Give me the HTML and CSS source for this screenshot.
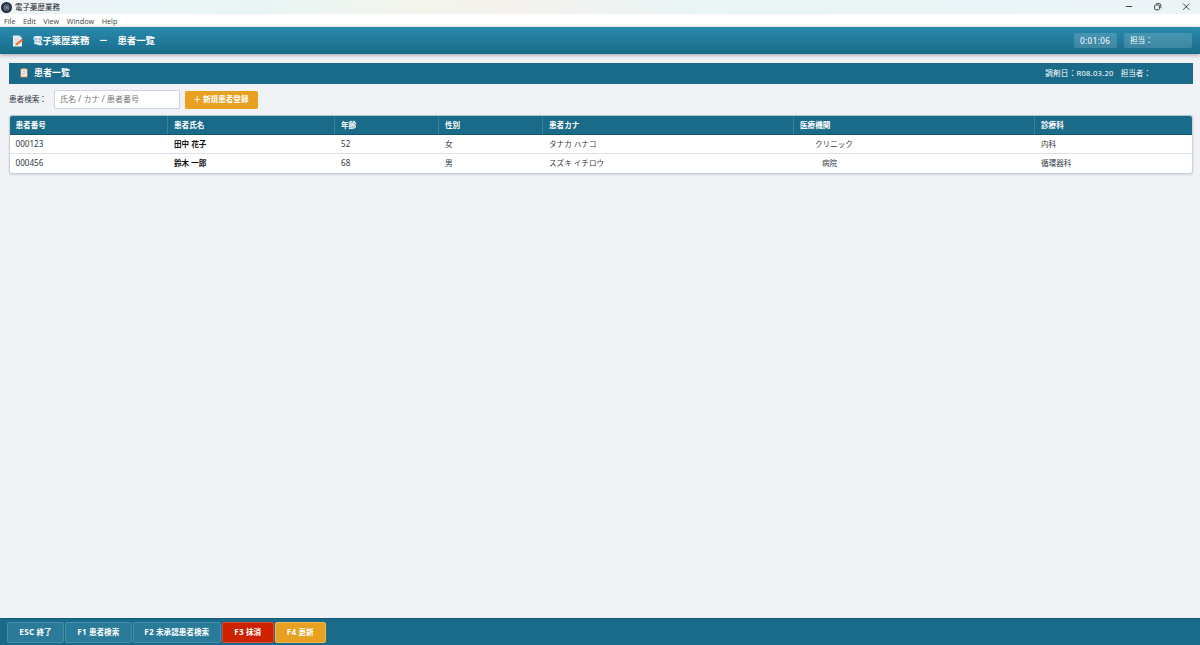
FILE: index.html
```html
<!DOCTYPE html>
<html lang="ja">
<head>
    <meta charset="UTF-8">
    <meta name="viewport" content="width=device-width, initial-scale=1.0">
    <title>電子薬歴業務</title>
    <link rel="stylesheet" href="styles.css">
</head>
<body>
    <div class="titlebar">
        <svg class="app-icon" viewBox="0 0 22 22">
            <circle cx="11" cy="11" r="11" fill="#272b3b"/>
            <g fill="none" stroke="#8fa7b8" stroke-width="1">
                <ellipse cx="11" cy="11" rx="7" ry="2.6"/>
                <ellipse cx="11" cy="11" rx="7" ry="2.6" transform="rotate(60 11 11)"/>
                <ellipse cx="11" cy="11" rx="7" ry="2.6" transform="rotate(120 11 11)"/>
            </g>
            <circle cx="11" cy="11" r="1.3" fill="#8fa7b8"/>
        </svg>
        <span class="app-name">電子薬歴業務</span>
        <div class="window-buttons">
            <svg viewBox="0 0 10 10"><path d="M1.8 4.5h6.4"/></svg>
            <svg viewBox="0 0 10 10"><rect x="1.6" y="3" width="4.8" height="4.8" rx="1"/><path d="M3.2 1.6h2.9a1.7 1.7 0 0 1 1.7 1.7v2.9"/></svg>
            <svg viewBox="0 0 10 10"><path d="M2 1.5l6.4 6.4M8.4 1.5l-6.4 6.4"/></svg>
        </div>
    </div>
    <nav class="menubar">
        <span>File</span><span>Edit</span><span>View</span><span>Window</span><span>Help</span>
    </nav>

    <header class="header">
        <svg class="memo-icon" viewBox="0 0 12 12">
            <path d="M1 .5h6.5L10 3v8.5H1z" fill="#e9edf4"/>
            <path d="M7.5.5V3H10z" fill="#b9c5d3"/>
            <path d="M2.3 3h4M2.3 4.8h5M2.3 6.6h3M2.3 8.4h2" stroke="#c5cbd6" stroke-width=".5"/>
            <path d="M3.2 10.5l.7-2.3 5-3.7 1.5 1.8-4.9 3.8z" fill="#f47a2c"/>
            <path d="M8.9 4.5l1-.7 1.5 1.8-1 .7z" fill="#e4405a"/>
        </svg>
        <h1>電子薬歴業務　<span class="dash">－</span>　患者一覧</h1>
        <div class="badge clock">0:01:06</div>
        <div class="badge staff">担当：</div>
    </header>

    <main class="content">
        <div class="panel-title">
            <svg class="clip-icon" viewBox="0 0 8 10">
                <rect x=".2" y=".5" width="7.6" height="9" rx=".5" fill="#bd7844"/>
                <rect x="1.1" y="1.2" width="5.8" height="7.5" fill="#f3f0f2"/>
                <rect x="2.6" y=".2" width="2.8" height="1.3" rx=".4" fill="#a9b1bb"/>
                <path d="M2 3.4h4M2 5h4M2 6.6h3" stroke="#a3a9bd" stroke-width=".5"/>
            </svg>
            <h2>患者一覧</h2>
            <span class="date">調剤日：R08.03.20</span>
            <span class="person">担当者：</span>
        </div>

        <div class="search">
            <label for="search">患者検索：</label>
            <input id="search" type="text" placeholder="氏名 / カナ / 患者番号">
            <button class="new-button">＋ 新規患者登録</button>
        </div>

        <table class="patients">
            <thead>
                <tr>
                    <th class="col-id">患者番号</th>
                    <th class="col-name">患者氏名</th>
                    <th class="col-age">年齢</th>
                    <th class="col-sex">性別</th>
                    <th class="col-kana">患者カナ</th>
                    <th class="col-clinic">医療機関</th>
                    <th>診療科</th>
                </tr>
            </thead>
            <tbody>
                <tr>
                    <td class="num">000123</td>
                    <td class="name">田中 花子</td>
                    <td class="num">52</td>
                    <td>女</td>
                    <td>タナカ ハナコ</td>
                    <td class="clinic">クリニック</td>
                    <td>内科</td>
                </tr>
                <tr>
                    <td class="num">000456</td>
                    <td class="name">鈴木 一郎</td>
                    <td class="num">68</td>
                    <td>男</td>
                    <td>スズキ イチロウ</td>
                    <td class="hospital">病院</td>
                    <td>循環器科</td>
                </tr>
            </tbody>
        </table>
    </main>

    <footer class="footer">
        <button class="key-esc"><span class="key">ESC</span> 終了</button>
        <button class="key-f1"><span class="key">F1</span> 患者検索</button>
        <button class="key-f2"><span class="key">F2</span> 未承認患者検索</button>
        <button class="key-f3 danger"><span class="key">F3</span> 抹消</button>
        <button class="key-f4 warning"><span class="key">F4</span> 更新</button>
    </footer>
</body>
</html>
```
FILE: styles.css
```css
* {
    box-sizing: border-box;
}
body {
    margin: 0;
    height: 100vh;
    display: flex;
    flex-direction: column;
    overflow: hidden;
    background: #f0f2f6;
    color: #333a44;
    font-family: "Noto Sans", "Noto Sans CJK JP", sans-serif;
    font-size: 7.6px;
    white-space: nowrap;
}
h1, h2 {
    margin: 0;
}
button, input {
    font-family: inherit;
    font-size: inherit;
    padding: 0;
}

/* ウィンドウ枠 */
.titlebar {
    height: 14px;
    display: flex;
    align-items: center;
    background: linear-gradient(90deg, #eef5fa, #e9f5f5 22%, #f3f6ed 34%, #f5f2ed 43%, #e9f5f6 58%, #ecf4f7);
}
.app-icon {
    width: 11px;
    height: 11px;
    margin-left: 1px;
}
.app-name {
    margin-left: 3px;
    padding-bottom: 1px;
    font-size: 7.5px;
    color: #222;
}
.window-buttons {
    display: flex;
    gap: 18.5px;
    margin-left: auto;
    margin-right: 9px;
}
.window-buttons svg {
    width: 10px;
    height: 10px;
    fill: none;
    stroke: #333;
    stroke-width: 0.9;
}
.menubar {
    height: 13px;
    display: flex;
    align-items: center;
    gap: 7.4px;
    padding-left: 4px;
    background: #fff;
    font-family: "Open Sans", sans-serif;
    font-size: 7.3px;
    color: #444;
}

/* ヘッダー */
.header {
    height: 27px;
    flex: none;
    display: flex;
    align-items: center;
    padding: 0 8px 0 12px;
    background: linear-gradient(#2a8aad, #1a6b8a);
    box-shadow: 0 1px 4px rgba(0, 0, 0, 0.35);
    color: #fff;
}
.memo-icon {
    width: 12px;
    height: 12px;
}
.header h1 {
    margin-left: 9px;
    padding-bottom: 2px;
    font-size: 9.4px;
}
.dash {
    font-weight: 900;
}
.badge {
    height: 15px;
    line-height: 15px;
    padding: 0 6px;
    border-radius: 2px;
    background: rgba(255, 255, 255, 0.15);
}
.clock {
    width: 43px;
    margin-left: auto;
    font-size: 8.1px;
    letter-spacing: 0.4px;
}
.staff {
    width: 68px;
    margin-left: 7px;
}

/* 患者一覧 */
.content {
    flex: 1;
    padding: 9px 7px 0 9px;
}
.panel-title {
    height: 21px;
    display: flex;
    align-items: center;
    padding: 0 42px 1px 11px;
    background: #1a6b8a;
    color: #fff;
}
.clip-icon {
    width: 8px;
    height: 10px;
}
.panel-title h2 {
    margin-left: 6px;
    padding-bottom: 1px;
    font-size: 9px;
}
.date, .person {
    padding-bottom: 1px;
}
.date {
    margin-left: auto;
    letter-spacing: 0.25px;
}
.person {
    margin-left: 7px;
}
.search {
    height: 31px;
    display: flex;
    align-items: center;
}
.search label {
    width: 45px;
    padding-bottom: 2px;
}
.search input {
    width: 126px;
    height: 19px;
    padding: 0 5px 2px;
    border: 1px solid #ccd5df;
    border-radius: 2px;
    background: #fff;
    font-size: 8.1px;
}
.search input::placeholder {
    color: #777;
}
.new-button {
    width: 73px;
    height: 18px;
    margin-left: 4.5px;
    padding-bottom: 2px;
    border: 0;
    border-radius: 2px;
    background: #e8a020;
    color: #fff;
    font-weight: bold;
}
.patients {
    width: 1184px;
    table-layout: fixed;
    border-collapse: separate;
    border-spacing: 0;
    border: 1px solid #c8d2dc;
    border-top-color: #a9c3cf;
    border-radius: 3px;
    overflow: hidden;
    background: #fff;
    box-shadow: 0 1px 2px rgba(0, 0, 0, 0.12);
}
.patients th, .patients td {
    padding: 0 6px;
    text-align: left;
    line-height: 10px;
}
.patients th {
    height: 19px;
    background: #1a6b8a;
    color: #fff;
    border-right: 1px solid #3b819c;
    border-bottom: 1px solid #145570;
}
.patients th:first-child, .patients td:first-child {
    padding-left: 5.5px;
}
.patients th:last-child {
    border-right: 0;
}
.patients td {
    height: 19px;
    padding-bottom: 1px;
    border-bottom: 1px solid #dbe0e9;
}
.patients tbody tr:last-child td {
    border-bottom: 0;
    padding-bottom: 2px;
}
.patients .num {
    font-size: 8.1px;
}
.patients .name {
    color: #111;
    font-weight: bold;
}
.patients .clinic {
    padding-left: 21px;
}
.patients .hospital {
    padding-left: 28px;
}
.col-id {
    width: 158px;
}
.col-name {
    width: 167px;
}
.col-age, .col-sex {
    width: 104px;
}
.col-kana {
    width: 251px;
}
.col-clinic {
    width: 241px;
}

/* ファンクションキー */
.footer {
    height: 27px;
    flex: none;
    display: flex;
    align-items: center;
    gap: 1px;
    padding: 1px 7px 0;
    border-top: 1px solid #145a75;
    background: #1a6b8a;
}
.footer button {
    height: 21px;
    padding-bottom: 2px;
    border: 1px solid #4a8fa9;
    border-radius: 2px;
    background: #2a7a99;
    color: #fff;
    font-weight: bold;
}
.footer .key {
    font-size: 8.1px;
    letter-spacing: 0.3px;
}
.key-esc {
    width: 57px;
}
.key-f1 {
    width: 66.5px;
}
.key-f2 {
    width: 88.5px;
}
.key-f3, .key-f4 {
    width: 51.5px;
}
.footer .danger {
    background: #cc2200;
    border-color: #e34a35;
}
.footer .warning {
    background: #e8a020;
    border-color: #f2b94f;
}
```
